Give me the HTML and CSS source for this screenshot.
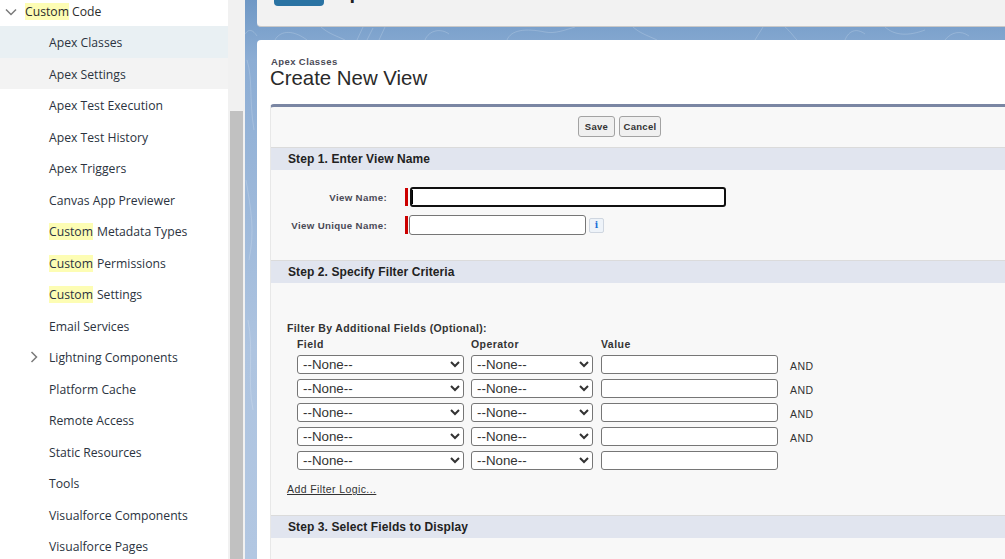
FILE: index.html
```html
<!DOCTYPE html>
<html lang="en">
<head>
    <meta charset="UTF-8">
    <meta name="viewport" content="width=device-width, initial-scale=1.0">
    <title>Create New View</title>
    <link rel="stylesheet" href="styles.css">
</head>
<body>

<div class="page">
    <!-- Setup tree -->
    <nav class="sidebar">
        <div class="tree-head">
            <svg class="chevron" width="14" height="14" viewBox="0 0 14 14"><path d="M2 4.5 L7 9.5 L12 4.5" stroke="#7a7a7a" stroke-width="1.5" fill="none"/></svg>
            <span><mark>Custom</mark> Code</span>
        </div>
        <a class="tree-item selected">Apex Classes</a>
        <a class="tree-item hovered">Apex Settings</a>
        <a class="tree-item">Apex Test Execution</a>
        <a class="tree-item">Apex Test History</a>
        <a class="tree-item">Apex Triggers</a>
        <a class="tree-item">Canvas App Previewer</a>
        <a class="tree-item"><mark>Custom</mark> Metadata Types</a>
        <a class="tree-item"><mark>Custom</mark> Permissions</a>
        <a class="tree-item"><mark>Custom</mark> Settings</a>
        <a class="tree-item">Email Services</a>
        <a class="tree-item">
            <svg class="chevron-right" width="14" height="14" viewBox="0 0 14 14"><path d="M4.5 2 L9.5 7 L4.5 12" stroke="#7a7a7a" stroke-width="1.5" fill="none"/></svg>
            Lightning Components
        </a>
        <a class="tree-item">Platform Cache</a>
        <a class="tree-item">Remote Access</a>
        <a class="tree-item">Static Resources</a>
        <a class="tree-item">Tools</a>
        <a class="tree-item">Visualforce Components</a>
        <a class="tree-item">Visualforce Pages</a>
    </nav>

    <div class="scroll-track"><div class="scroll-thumb"></div></div>

    <main class="content">
        <!-- Faint contour lines in the blue backdrop -->
        <svg class="contours" width="760" height="559" viewBox="0 0 760 559">
            <g stroke="#ffffff" stroke-opacity="0.18" fill="none">
                <path d="M0 34 C4 28 8 30 12 36 M30 40 C34 32 46 28 62 40 M76 27 C84 34 92 36 100 40 M112 40 L118 27 M122 40 L128 28 M134 40 L140 27"/>
                <path d="M180 40 C184 30 196 28 204 34 M262 40 C266 30 280 28 300 32 C310 34 320 30 330 27 M388 27 C396 34 404 36 412 40 M510 40 L518 27 M540 27 C546 32 548 36 552 40"/>
                <path d="M600 40 C604 30 612 28 620 34 M640 27 C650 36 664 36 680 30 M700 40 C706 32 716 30 724 36"/>
                <path d="M2 60 C8 80 4 100 9 130 M1 180 C6 210 10 230 4 260 M3 320 C9 350 2 380 8 410"/>
            </g>
        </svg>

        <div class="top-card">
            <div class="top-btn"></div>
            <div class="top-title">Apex Classes</div>
        </div>

        <div class="card">
            <div class="page-type">Apex Classes</div>
            <h1 class="page-title">Create New View</h1>

            <div class="panel">
                <div class="btn-row">
                    <button class="btn btn-save">Save</button>
                    <button class="btn btn-cancel">Cancel</button>
                </div>

                <h2 class="step">Step 1. Enter View Name</h2>
                <div class="step-body name-fields">
                    <div class="form-row">
                        <label class="form-label">View Name:</label>
                        <span class="required"></span>
                        <span class="focus-wrap">
                            <input class="input-name" type="text">
                            <span class="caret"></span>
                        </span>
                    </div>
                    <div class="form-row row-unique">
                        <label class="form-label">View Unique Name:</label>
                        <span class="required"></span>
                        <input class="input-unique" type="text">
                        <span class="info-btn">i</span>
                    </div>
                </div>

                <h2 class="step">Step 2. Specify Filter Criteria</h2>
                <div class="step-body filter-body">
                    <div class="filter-title">Filter By Additional Fields (Optional):</div>
                    <div class="filter-row filter-head">
                        <span class="col-field">Field</span>
                        <span class="col-op">Operator</span>
                        <span class="col-val">Value</span>
                    </div>
                    <div class="filter-row">
                        <select class="col-field"><option>--None--</option></select>
                        <select class="col-op"><option>--None--</option></select>
                        <input class="col-val" type="text">
                        <span class="and">AND</span>
                    </div>
                    <div class="filter-row">
                        <select class="col-field"><option>--None--</option></select>
                        <select class="col-op"><option>--None--</option></select>
                        <input class="col-val" type="text">
                        <span class="and">AND</span>
                    </div>
                    <div class="filter-row">
                        <select class="col-field"><option>--None--</option></select>
                        <select class="col-op"><option>--None--</option></select>
                        <input class="col-val" type="text">
                        <span class="and">AND</span>
                    </div>
                    <div class="filter-row">
                        <select class="col-field"><option>--None--</option></select>
                        <select class="col-op"><option>--None--</option></select>
                        <input class="col-val" type="text">
                        <span class="and">AND</span>
                    </div>
                    <div class="filter-row">
                        <select class="col-field"><option>--None--</option></select>
                        <select class="col-op"><option>--None--</option></select>
                        <input class="col-val" type="text">
                    </div>
                    <a class="filter-logic">Add Filter Logic...</a>
                </div>

                <h2 class="step">Step 3. Select Fields to Display</h2>
            </div>
        </div>
    </main>
</div>

</body>
</html>
```

FILE: styles.css
```css
html, body {
    margin: 0;
    height: 100%;
    overflow: hidden;
}
.page {
    display: flex;
    width: 1005px;
    height: 559px;
    overflow: hidden;
    font-family: "Liberation Sans", Arial, sans-serif;
}

/* Sidebar */
.sidebar {
    width: 228px;
    flex-shrink: 0;
    background-color: #fff;
    font-family: "Open Sans", "Noto Sans", sans-serif;
    font-size: 12.2px;
    color: #16325c;
}
.tree-head {
    display: flex;
    align-items: center;
    height: 26px;
    padding: 0 0 3px 25px;
    box-sizing: border-box;
    position: relative;
    color: #2b2b2b;
}
.chevron {
    position: absolute;
    left: 4px;
    top: 5px;
}
.tree-item {
    display: flex;
    align-items: center;
    height: 31.5px;
    padding: 1.5px 0 0 49px;
    box-sizing: border-box;
    position: relative;
    color: #2b3340;
}
.chevron-right {
    position: absolute;
    left: 27px;
    top: 9px;
}
.selected {
    background-color: #e9f0f3;
}
.hovered {
    background-color: #f3f3f3;
}
mark {
    background-color: #fdfdb4;
    color: inherit;
    white-space: pre;
}
.tree-item mark {
    margin-right: 4px;
}

.scroll-track {
    width: 17px;
    flex-shrink: 0;
    background-color: #f1f1f1;
    padding-top: 111px;
    box-sizing: border-box;
}
.scroll-thumb {
    width: 13px;
    height: 448px;
    margin-left: 2px;
    background-color: #c1c1c1;
}

/* Main area */
.content {
    flex: 1;
    position: relative;
    padding-left: 12px;
    background: linear-gradient(180deg, #6f98c5 0, #8cadd4 60px, #aec4e0 350px, #b2c7e2 559px);
}
.contours {
    position: absolute;
    left: 0;
    top: 0;
}
.top-card {
    position: relative;
    height: 27px;
    margin-bottom: 13px;
    overflow: hidden;
    background-color: #f2f2f2;
    border-bottom: 1px solid #c9c9c9;
    border-bottom-left-radius: 4px;
    box-sizing: border-box;
    display: flex;
    align-items: flex-start;
}
.top-btn {
    width: 50px;
    height: 6px;
    margin-left: 17px;
    background-color: #2a73a3;
    border-radius: 0 0 4px 4px;
}
.top-title {
    margin: -20px 0 0 11px;
    font-size: 20px;
    line-height: 24px;
    font-weight: bold;
    color: #222;
}
.card {
    position: relative;
    height: 519px;
    padding: 16px 0 0 13px;
    box-sizing: border-box;
    background-color: #fff;
    border-top-left-radius: 4px;
}
.page-type {
    margin: 1px 0 -1px 1px;
    font-size: 9.5px;
    line-height: 10px;
    font-weight: bold;
    letter-spacing: 0.4px;
    color: #4a4a56;
}
.page-title {
    margin: 0;
    font-size: 20.4px;
    line-height: 24px;
    font-weight: normal;
    color: #2a2a2a;
}

/* Panel */
.panel {
    margin-top: 14px;
    height: 460px;
    border-top: 3px solid #7a86a3;
    border-left: 1px solid #e8e8e8;
    border-top-left-radius: 4px;
    background-color: #f8f8f8;
}
.btn-row {
    display: flex;
    gap: 4px;
    height: 40px;
    padding: 9px 0 0 307px;
    box-sizing: border-box;
}
.btn {
    height: 21px;
    padding: 0;
    font-family: "Liberation Sans", Arial, sans-serif;
    font-size: 9.5px;
    font-weight: bold;
    letter-spacing: 0.3px;
    color: #333;
    background-color: #f0f0f0;
    border: 1px solid #a3a3a3;
    border-radius: 3px;
}
.btn-save {
    width: 37px;
}
.btn-cancel {
    width: 42px;
}
.step {
    margin: 0;
    height: 23px;
    padding-left: 17px;
    box-sizing: border-box;
    border-top: 1px solid #dbdbdb;
    background-color: #e1e5ef;
    font-size: 12px;
    line-height: 22px;
    font-weight: bold;
    letter-spacing: 0.1px;
    color: #222;
}
.name-fields {
    height: 90px;
    padding-top: 17px;
    box-sizing: border-box;
}
.form-row {
    display: flex;
    align-items: center;
    height: 20px;
}
.row-unique {
    margin-top: 8px;
}
.form-label {
    width: 116px;
    text-align: right;
    font-size: 9.7px;
    font-weight: bold;
    letter-spacing: 0.35px;
    color: #4a4a56;
}
.required {
    width: 3px;
    height: 18px;
    margin-left: 18px;
    background-color: #c00;
}
.focus-wrap {
    position: relative;
    display: flex;
    margin-left: 2px;
}
.input-name {
    width: 316px;
    height: 20px;
    box-sizing: border-box;
    padding: 0;
    border: 2px solid #101010;
    border-radius: 3px;
    background-color: #fff;
}
.caret {
    position: absolute;
    left: 2px;
    top: 3px;
    width: 1px;
    height: 14px;
    background-color: #000;
}
.input-unique {
    width: 177px;
    height: 20px;
    box-sizing: border-box;
    padding: 0;
    margin-left: 1px;
    border: 1px solid #767676;
    border-radius: 3px;
    background-color: #fff;
}
.info-btn {
    width: 13px;
    height: 13px;
    margin-left: 3px;
    border: 1px solid #cfd6e0;
    border-radius: 2px;
    background-color: #eef3f9;
    font-family: "DejaVu Serif", serif;
    font-size: 9px;
    line-height: 13px;
    font-weight: bold;
    text-align: center;
    color: #1a6ed8;
}

/* Filters */
.filter-body {
    height: 232px;
    padding: 39px 0 0 16px;
    box-sizing: border-box;
}
.filter-title {
    font-size: 10.5px;
    line-height: 12px;
    font-weight: bold;
    letter-spacing: 0.38px;
    color: #333;
}
.filter-row {
    display: flex;
    align-items: center;
    height: 24px;
    padding-left: 10px;
}
.filter-head {
    height: 18px;
    padding-top: 2px;
    box-sizing: border-box;
    font-size: 10.5px;
    font-weight: bold;
    color: #333;
    letter-spacing: 0.45px;
}
.col-field {
    width: 167px;
    margin-right: 7px;
}
.col-op {
    width: 122px;
    margin-right: 8px;
}
.col-val {
    width: 177px;
}
select.col-field, select.col-op, input.col-val {
    height: 19px;
    margin-top: 1px;
    box-sizing: border-box;
    padding: 0 0 0 1px;
    border: 1px solid #767676;
    border-radius: 3px;
    background-color: #fff;
    font-family: "Liberation Sans", Arial, sans-serif;
    font-size: 13.33px;
    letter-spacing: 0;
    color: #333;
}
.and {
    margin: 4px 0 0 12px;
    font-size: 10.5px;
    color: #333;
    letter-spacing: 0.5px;
}
.filter-logic {
    display: block;
    margin-top: 11px;
    font-size: 10.5px;
    line-height: 12px;
    letter-spacing: 0.4px;
    color: #333;
    text-decoration: underline;
}
```
